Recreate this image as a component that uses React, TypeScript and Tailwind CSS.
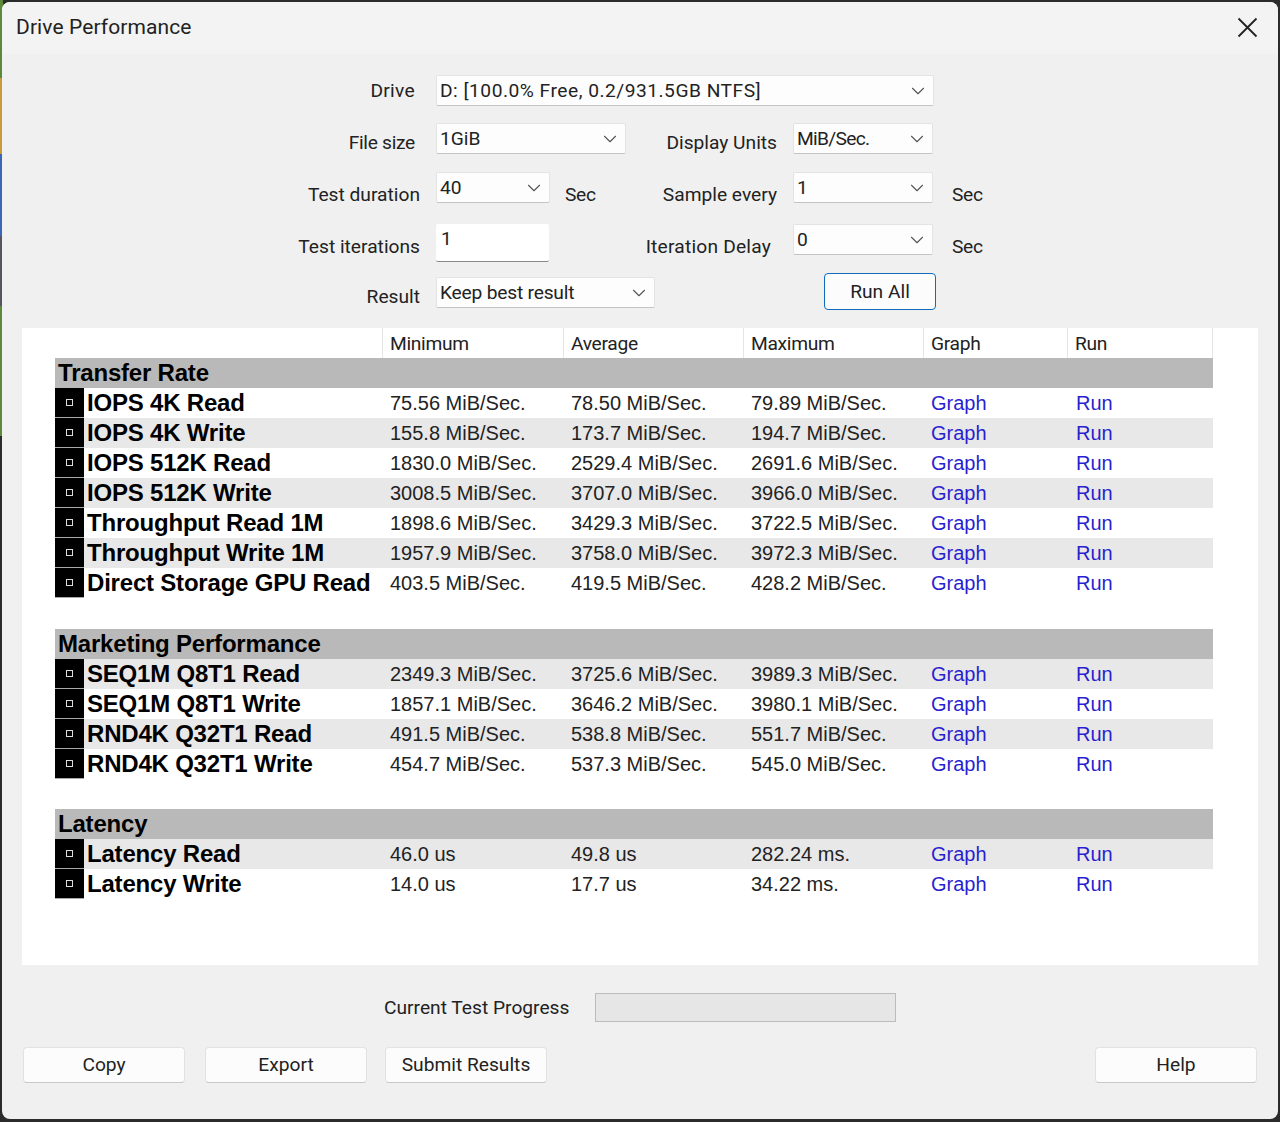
import { ChevronDown } from "lucide-react";

type Row = { name: string; min: string; avg: string; max: string };

const transferRows: Row[] = [
  { name: "IOPS 4K Read", min: "75.56 MiB/Sec.", avg: "78.50 MiB/Sec.", max: "79.89 MiB/Sec." },
  { name: "IOPS 4K Write", min: "155.8 MiB/Sec.", avg: "173.7 MiB/Sec.", max: "194.7 MiB/Sec." },
  { name: "IOPS 512K Read", min: "1830.0 MiB/Sec.", avg: "2529.4 MiB/Sec.", max: "2691.6 MiB/Sec." },
  { name: "IOPS 512K Write", min: "3008.5 MiB/Sec.", avg: "3707.0 MiB/Sec.", max: "3966.0 MiB/Sec." },
  { name: "Throughput Read 1M", min: "1898.6 MiB/Sec.", avg: "3429.3 MiB/Sec.", max: "3722.5 MiB/Sec." },
  { name: "Throughput Write 1M", min: "1957.9 MiB/Sec.", avg: "3758.0 MiB/Sec.", max: "3972.3 MiB/Sec." },
  { name: "Direct Storage GPU Read", min: "403.5 MiB/Sec.", avg: "419.5 MiB/Sec.", max: "428.2 MiB/Sec." },
];

const marketingRows: Row[] = [
  { name: "SEQ1M Q8T1 Read", min: "2349.3 MiB/Sec.", avg: "3725.6 MiB/Sec.", max: "3989.3 MiB/Sec." },
  { name: "SEQ1M Q8T1 Write", min: "1857.1 MiB/Sec.", avg: "3646.2 MiB/Sec.", max: "3980.1 MiB/Sec." },
  { name: "RND4K Q32T1 Read", min: "491.5 MiB/Sec.", avg: "538.8 MiB/Sec.", max: "551.7 MiB/Sec." },
  { name: "RND4K Q32T1 Write", min: "454.7 MiB/Sec.", avg: "537.3 MiB/Sec.", max: "545.0 MiB/Sec." },
];

const latencyRows: Row[] = [
  { name: "Latency Read", min: "46.0 us", avg: "49.8 us", max: "282.24 ms." },
  { name: "Latency Write", min: "14.0 us", avg: "17.7 us", max: "34.22 ms." },
];

const gridCols = "grid grid-cols-[327px_181px_180px_180px_144px_146px]";
const uiFont = "font-['Roboto',sans-serif] text-[19.2px] leading-[24px] text-[#222]";
const boldFont = "font-['Liberation_Sans',sans-serif] font-bold text-[24px] tracking-[-0.2px] text-black";
const headCell = "h-full pl-[7px] pt-[1px] flex items-center tracking-[-0.3px] border-l border-[#e5e5e5]";

function Select({ value, width, textClass = "" }: { value: string; width: string; textClass?: string }) {
  return (
    <div className={`${width} h-[31px] shrink-0 flex items-center justify-between pl-[3px] pr-[4px] bg-[#fdfdfd] border border-[#e3e3e3] border-b-[#c4c4c4] rounded-[2px]`}>
      <span className={textClass}>{value}</span>
      <ChevronDown size={22} strokeWidth={1.2} className="text-[#555]" />
    </div>
  );
}

function Button({ label, width }: { label: string; width: string }) {
  return (
    <div className={`${width} h-[36px] flex items-center justify-center bg-[#fcfcfc] border border-[#e2e2e2] border-b-[#c8c8c8] rounded-[4px]`}>
      {label}
    </div>
  );
}

function DataRow({ row, grey }: { row: Row; grey: boolean }) {
  return (
    <div className={`${gridCols} h-[30px] items-center font-['Liberation_Sans',sans-serif] text-[20px] ${grey ? "bg-[#e8e8e8]" : "bg-white"}`}>
      <div className="flex h-[30px] items-center">
        <div className="w-[29px] h-[30px] shrink-0 flex items-center justify-center bg-black border-b border-[#aaa]">
          <div className="w-[7px] h-[7px] border border-[#ddd]" />
        </div>
        <span className={`ml-[3px] whitespace-nowrap ${boldFont}`}>{row.name}</span>
      </div>
      <span className="pl-[8px]">{row.min}</span>
      <span className="pl-[8px]">{row.avg}</span>
      <span className="pl-[8px]">{row.max}</span>
      <span className="pl-[8px] text-[#2a1fd0]">Graph</span>
      <span className="pl-[9px] text-[#2a1fd0]">Run</span>
    </div>
  );
}

function Section({ title, rows, firstGrey, gap }: { title: string; rows: Row[]; firstGrey: boolean; gap: string }) {
  return (
    <div className={gap}>
      <div className={`h-[30px] flex items-center pl-[3px] bg-[#b9b9b9] ${boldFont}`}>
        {title}
      </div>
      {rows.map((row, i) => (
        <DataRow key={row.name} row={row} grey={i % 2 === 0 ? firstGrey : !firstGrey} />
      ))}
    </div>
  );
}

export default function App() {
  return (
    <div className="w-[1280px] h-[1122px] flex bg-[#2b2b2b] overflow-hidden">
      <div className="w-[3px] h-full flex flex-col shrink-0">
        <div className="h-[78px] bg-[#5d8a3a]" />
        <div className="h-[76px] bg-[#c89a3c]" />
        <div className="h-[82px] bg-[#3b66b5]" />
        <div className="h-[70px] bg-[#5a5460]" />
        <div className="h-[130px] bg-[#5d8a3a]" />
        <div className="flex-1 bg-[#2b2b2b]" />
      </div>
      <div className={`w-[1276px] h-[1117px] mt-[2px] -ml-[1px] rounded-[8px] bg-[#f0f0f0] overflow-hidden ${uiFont}`}>
        <div className="h-[52px] bg-[#f3f3f3] flex items-center justify-between pl-[14px] pr-[20px]">
          <span className="text-[21px] tracking-[0.1px] -mt-[3px]">Drive Performance</span>
          <svg width="21" height="21" viewBox="0 0 21 21" className="-mt-[2px]">
            <path d="M1.5 1.5 L19.5 19.5 M19.5 1.5 L1.5 19.5" stroke="#222" strokeWidth="1.8" fill="none" />
          </svg>
        </div>

        <div className="pt-[21px] h-[274px]">
          <div className="flex items-start">
            <div className="w-[413px] pt-[4px] text-right tracking-[0.3px]">Drive</div>
            <div className="ml-[21px]"><Select value="D: [100.0% Free, 0.2/931.5GB NTFS]" width="w-[498px]" textClass="tracking-[0.5px]" /></div>
          </div>

          <div className="flex items-start mt-[17px]">
            <div className="w-[413px] pt-[8px] text-right tracking-[-0.3px]">File size</div>
            <div className="ml-[21px] w-[341px] flex justify-between">
              <Select value="1GiB" width="w-[190px]" />
              <span className="pt-[8px]">Display Units</span>
            </div>
            <div className="ml-[16px]"><Select value="MiB/Sec." width="w-[140px]" textClass="tracking-[-0.7px]" /></div>
          </div>

          <div className="flex items-start mt-[17px]">
            <div className="w-[418px] pt-[11px] text-right">Test duration</div>
            <div className="ml-[16px] w-[341px] flex">
              <Select value="40" width="w-[114px]" />
              <span className="ml-[15px] pt-[11px] tracking-[-0.3px]">Sec</span>
              <span className="ml-auto pt-[11px]">Sample every</span>
            </div>
            <div className="ml-[16px]"><Select value="1" width="w-[140px]" /></div>
            <span className="ml-[19px] pt-[11px] tracking-[-0.3px]">Sec</span>
          </div>

          <div className="flex items-start mt-[17px]">
            <div className="w-[418px] pt-[11px] text-right">Test iterations</div>
            <div className="ml-[16px] w-[341px] flex">
              <div className="w-[113px] h-[38px] shrink-0 pl-[5px] pt-[3px] bg-white border-b border-[#8a8a8a] rounded-[2px]">1</div>
              <span className="ml-auto mr-[6px] pt-[11px] tracking-[0.2px]">Iteration Delay</span>
            </div>
            <div className="ml-[16px]"><Select value="0" width="w-[140px]" /></div>
            <span className="ml-[19px] pt-[11px] tracking-[-0.3px]">Sec</span>
          </div>

          <div className="flex items-start mt-[15px]">
            <div className="w-[418px] pt-[8px] text-right">Result</div>
            <div className="ml-[16px] w-[388px]"><Select value="Keep best result" width="w-[219px]" textClass="tracking-[-0.2px]" /></div>
            <div className="-mt-[4px] w-[112px] h-[37px] flex items-center justify-center bg-[#fcfcfc] border border-[#0f6cbd] rounded-[4px]">Run All</div>
          </div>
        </div>

        <div className="mx-[20px] h-[637px] bg-white pl-[33px] pr-[45px]">
          <div className={`${gridCols} h-[30px] items-center`}>
            <div className="h-full" />
            <div className={headCell}>Minimum</div>
            <div className={headCell}>Average</div>
            <div className={headCell}>Maximum</div>
            <div className={headCell}>Graph</div>
            <div className={`${headCell} border-r`}>Run</div>
          </div>
          <Section title="Transfer Rate" rows={transferRows} firstGrey={false} gap="mb-[31px]" />
          <Section title="Marketing Performance" rows={marketingRows} firstGrey={true} gap="mb-[30px]" />
          <Section title="Latency" rows={latencyRows} firstGrey={true} gap="mb-[30px]" />
        </div>

        <div className="flex items-center mt-[28px] h-[29px]">
          <span className="ml-[382px] w-[211px] whitespace-nowrap">Current Test Progress</span>
          <div className="w-[301px] h-[29px] bg-[#e6e6e6] border border-[#bcbcbc]" />
        </div>

        <div className="flex mt-[25px] pl-[21px]">
          <Button label="Copy" width="w-[162px]" />
          <div className="ml-[20px]"><Button label="Export" width="w-[162px]" /></div>
          <div className="ml-[18px]"><Button label="Submit Results" width="w-[162px]" /></div>
          <div className="ml-[548px]"><Button label="Help" width="w-[162px]" /></div>
        </div>
      </div>
    </div>
  );
}
